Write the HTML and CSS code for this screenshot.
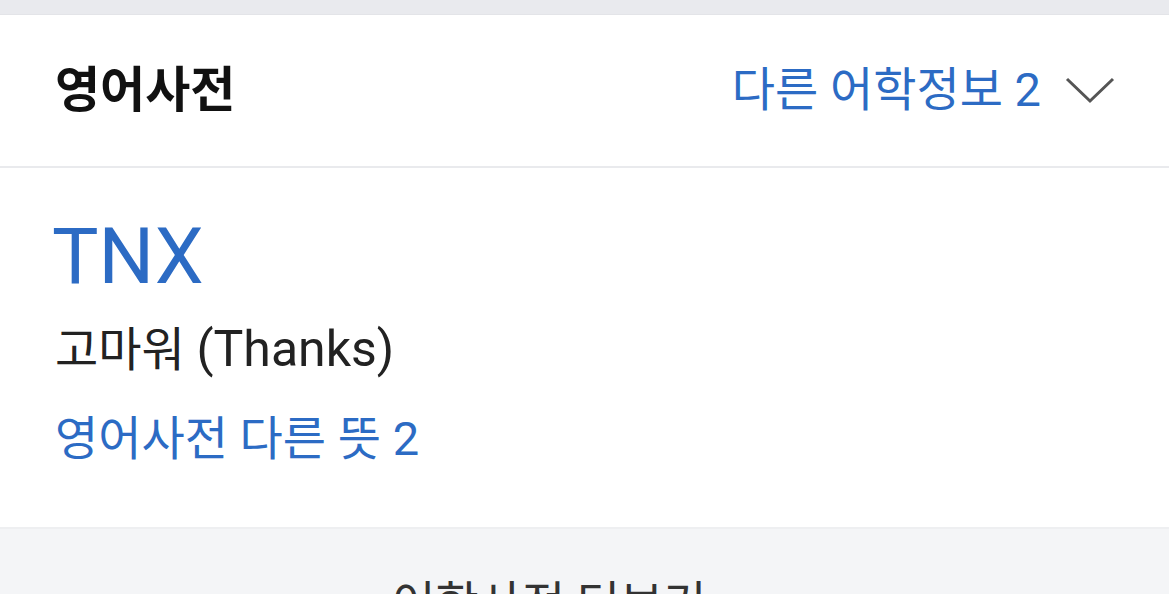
FILE: index.html
```html
<!DOCTYPE html>
<html lang="ko">
<head>
  <meta charset="UTF-8" />
  <meta name="viewport" content="width=device-width, initial-scale=1.0" />
  <title>영어사전 - TNX</title>
  <link rel="stylesheet" href="styles.css">
</head>
<body>

  <div class="top-gap"></div>

  <section class="dict-card">
    <div class="dict-head">
      <h2 class="dict-title">영어사전</h2>
      <a class="other-info" href="#">
        다른 어학정보 2
        <svg class="chevron-down" width="50" height="28" viewBox="0 0 50 28">
          <polyline points="2,3 25,25 48,3" fill="none" stroke="#555" stroke-width="3" />
        </svg>
      </a>
    </div>

    <div class="dict-entry">
      <a class="entry-word" href="#">TNX</a>
      <p class="entry-mean">고마워 <span class="latin">(Thanks)</span></p>
      <a class="entry-more" href="#">영어사전 다른 뜻 2</a>
    </div>
  </section>

  <div class="more-dict">
    <a href="#">어학사전 더보기 <span class="arrow">&gt;</span></a>
  </div>

</body>
</html>
```

FILE: styles.css
```css
*,
*::before,
*::after {
  box-sizing: border-box;
  margin: 0;
  padding: 0;
}

body {
  font-family: Roboto, "Noto Sans CJK KR", sans-serif;
  background-color: #f4f5f7;
  color: #222;
  overflow: hidden;
}

a {
  text-decoration: none;
  color: #2c6bc4;
}

.top-gap {
  height: 15px;
  background-color: #e9eaee;
  border-bottom: 1px solid #e3e4e8;
}

.dict-card {
  background-color: #fff;
  border-bottom: 2px solid #eeeff1;
}

.dict-head {
  display: flex;
  align-items: center;
  justify-content: space-between;
  height: 153px;
  padding: 0 54px 10px 55px;
  border-bottom: 2px solid #e9eaed;
}

.dict-title {
  font-size: 49px;
  font-weight: bold;
  color: #111;
}

.other-info {
  display: flex;
  align-items: center;
  gap: 24px;
  font-size: 47px;
}

.chevron-down {
  margin-top: 8px;
}

.dict-entry {
  padding: 50px 55px 52px;
}

.entry-word {
  display: block;
  font-size: 78px;
  line-height: 1;
  margin-left: -3px;
}

.entry-mean {
  font-size: 47px;
  line-height: 1.5;
  margin-top: 16px;
}

.entry-mean .latin {
  font-size: 50px;
}

.entry-more {
  display: block;
  font-size: 47px;
  line-height: 1.5;
  margin-top: 17px;
}

.more-dict {
  text-align: center;
  padding-top: 36px;
  font-size: 47px;
}

.more-dict a {
  color: #333;
}

.more-dict .arrow {
  margin-left: 34px;
  color: #555;
}
```
